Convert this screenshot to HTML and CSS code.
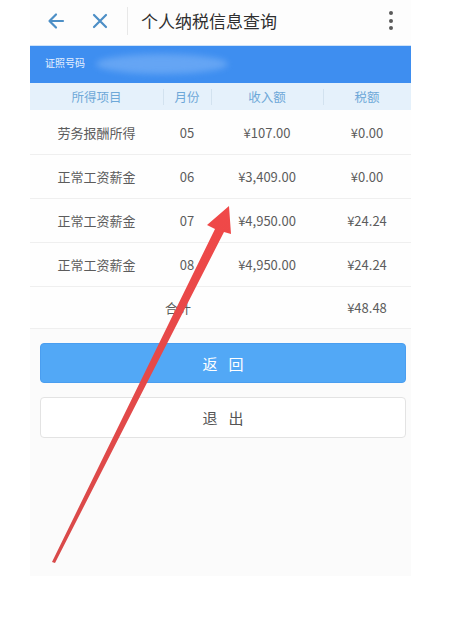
FILE: index.html
```html
<!DOCTYPE html>
<html lang="zh">
<head>
<meta charset="utf-8">
<title>个人纳税信息查询</title>
<link rel="stylesheet" href="styles.css">
</head>
<body>
<div class="page">
  <div class="screen">
    <header class="topbar">
      <svg class="icon back" viewBox="0 0 20 20" width="20" height="20"><path d="M17 10H4M10 3.5L3.5 10 10 16.5" fill="none" stroke="#4d8fc6" stroke-width="2.2" stroke-linecap="round" stroke-linejoin="round"/></svg>
      <svg class="icon close" viewBox="0 0 20 20" width="20" height="20"><path d="M4 4L16 16M16 4L4 16" fill="none" stroke="#4d8fc6" stroke-width="2.2" stroke-linecap="round"/></svg>
      <span class="divider"></span>
      <h1 class="title">个人纳税信息查询</h1>
      <span class="kebab"><i></i><i></i><i></i></span>
    </header>
    <div class="idbar">
      <span class="idlabel">证照号码</span>
      <span class="smudge"></span>
    </div>
    <div class="table">
      <div class="row head">
        <span class="c c1">所得项目</span>
        <span class="c c2">月份</span>
        <span class="c c3">收入额</span>
        <span class="c c4">税额</span>
      </div>
      <div class="row first">
        <span class="c">劳务报酬所得</span><span class="c">05</span><span class="c">¥107.00</span><span class="c">¥0.00</span>
      </div>
      <div class="row">
        <span class="c">正常工资薪金</span><span class="c">06</span><span class="c">¥3,409.00</span><span class="c">¥0.00</span>
      </div>
      <div class="row">
        <span class="c">正常工资薪金</span><span class="c">07</span><span class="c">¥4,950.00</span><span class="c">¥24.24</span>
      </div>
      <div class="row">
        <span class="c">正常工资薪金</span><span class="c">08</span><span class="c">¥4,950.00</span><span class="c">¥24.24</span>
      </div>
      <div class="row total">
        <span class="c"></span><span class="c sum">合计</span><span class="c"></span><span class="c">¥48.48</span>
      </div>
    </div>
    <div class="buttons">
      <button class="btn primary">返回</button>
      <button class="btn plain">退出</button>
    </div>
  </div>
  <svg class="arrow" viewBox="0 0 459 623" width="459" height="623">
    <defs>
      <linearGradient id="ag" x1="0" y1="0" x2="0" y2="1">
        <stop offset="0" stop-color="#f04848"/>
        <stop offset="1" stop-color="#d84a4a"/>
      </linearGradient>
    </defs>
    <polygon fill="url(#ag)" points="229,206 231,234 224,232 55,563 52,562 215,229 207,225"/>
  </svg>
</div>
</body>
</html>
```

FILE: styles.css
```css
* { box-sizing: border-box; }
html, body { margin: 0; padding: 0; background: #ffffff; }
body {
  font-family: "Noto Sans CJK SC", "Noto Sans", "Liberation Sans", sans-serif;
  width: 459px;
  height: 623px;
  overflow: hidden;
}
.page { position: relative; width: 459px; height: 623px; }
.screen {
  margin-left: 30px;
  width: 381px;
  height: 576px;
  background: #fbfbfb;
}
.topbar {
  display: flex;
  align-items: center;
  height: 45px;
  background: #fdfdfd;
  padding-left: 16px;
  padding-right: 18px;
}
.icon { display: block; flex: none; }
.back { margin-top: -4px; }
.close { margin-left: 24px; margin-top: -4px; }
.divider {
  width: 1px;
  height: 28px;
  background: #e8e8e8;
  margin-left: 17px;
  margin-top: -4px;
}
.title {
  margin: -4px 0 0 13px;
  font-size: 17px;
  font-weight: 400;
  color: #2f2f2f;
  flex: 1;
}
.kebab {
  display: flex;
  flex-direction: column;
  gap: 3.5px;
  margin-top: -4px;
}
.kebab i {
  display: block;
  width: 4px;
  height: 4px;
  border-radius: 50%;
  background: #5a5a5a;
}
.idbar {
  position: relative;
  height: 38px;
  background: #3e8ef0;
  border-top: 1px solid #cfe3f8;
  display: flex;
  align-items: center;
  padding-left: 15px;
  overflow: hidden;
}
.idlabel {
  font-size: 10px;
  color: #e6f0ff;
  margin-top: -5px;
}
.smudge {
  position: absolute;
  left: 66px;
  top: 8px;
  width: 132px;
  height: 20px;
  border-radius: 50%;
  background: #6fabf5;
  filter: blur(3px);
  opacity: 0.8;
}
.table { background: #fefefe; }
.row {
  display: grid;
  grid-template-columns: 133px 48px 112px 88px;
  height: 44px;
  align-items: center;
  border-bottom: 1px solid #efefef;
  font-size: 13px;
  color: #5c5c5c;
}
.row.first { height: 45px; }
.row .c { text-align: center; }
.row.head {
  height: 27px;
  background: #e5f1fb;
  color: #6ea8d8;
  font-size: 12.5px;
  border-bottom: none;
}
.row.head .c { position: relative; }
.row.head .c2::before,
.row.head .c3::before,
.row.head .c4::before {
  content: "";
  position: absolute;
  left: 0;
  top: 2px;
  width: 1px;
  height: 16px;
  background: #d2e2ef;
}
.row.total { height: 42px; }
.sum { padding-right: 18px; }
.buttons {
  padding: 14px 5px 0 10px;
  display: flex;
  flex-direction: column;
  gap: 14px;
}
.btn {
  display: block;
  width: 366px;
  height: 40px;
  border-radius: 4px;
  font-family: inherit;
  font-size: 15px;
  letter-spacing: 11px;
  text-indent: 11px;
  cursor: pointer;
}
.primary {
  background: #52a8f6;
  border: 1px solid #4a9ef0;
  color: #ffffff;
}
.plain {
  height: 41px;
  background: #ffffff;
  border: 1px solid #e3e3e3;
  color: #555;
}
.arrow {
  position: absolute;
  left: 0;
  top: 0;
  pointer-events: none;
}
```
